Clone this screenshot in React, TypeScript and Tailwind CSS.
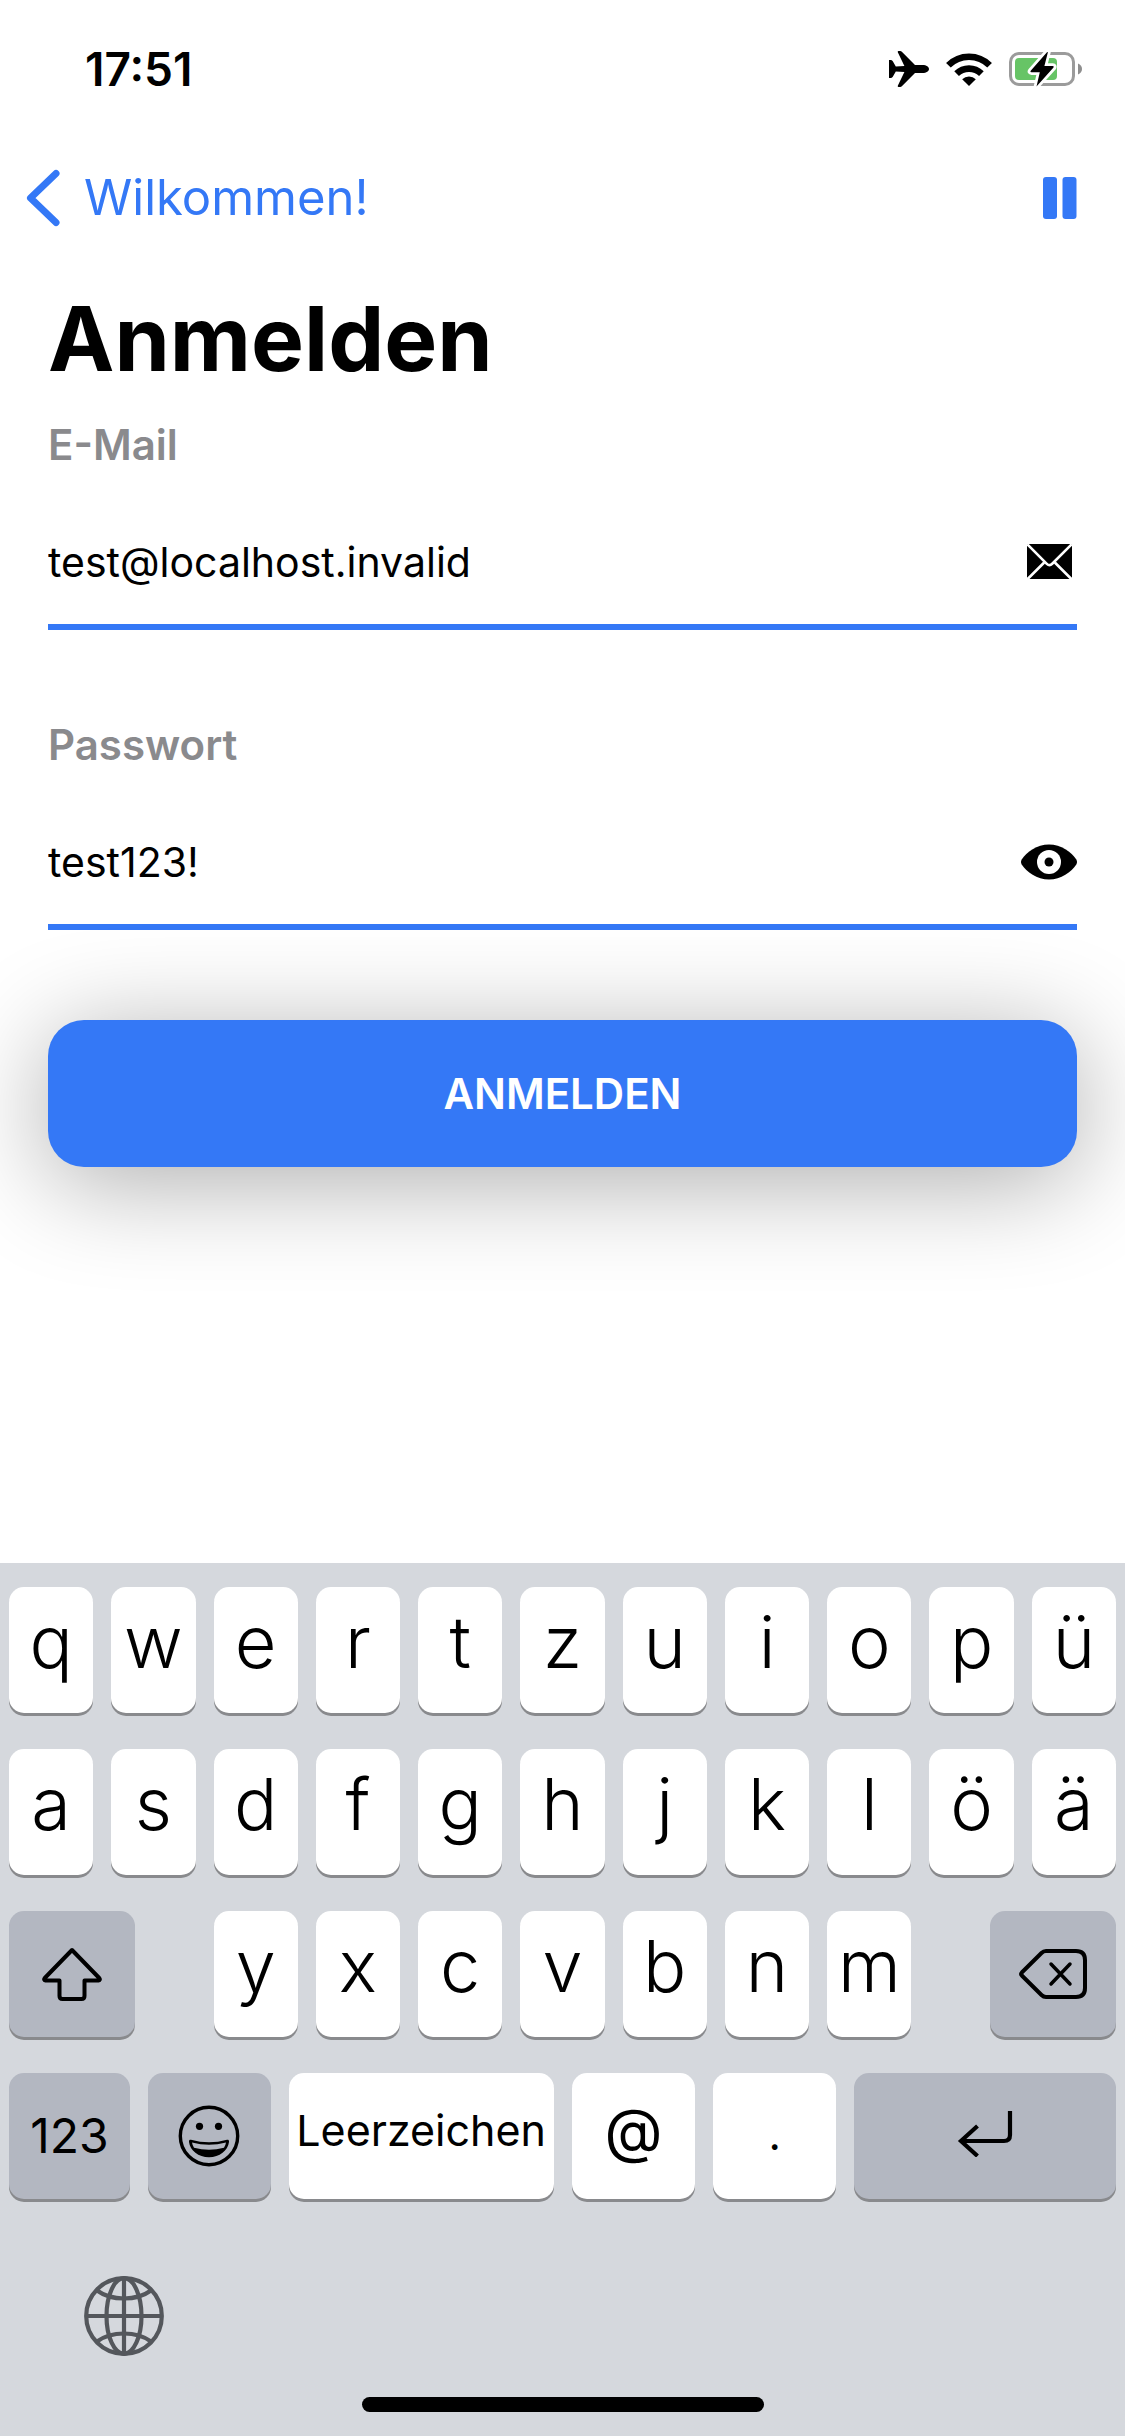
import { useState, type ReactNode } from "react";

function AirplaneIcon() {
  return (
    <svg viewBox="0 0 40 36" className="h-9 w-10" fill="#000" aria-hidden="true">
      <path d="M0 9h1.500q1.500 0 2.300 1.200l3 5.200 8.600-.5L8.800 1.200Q8.400 0 9.600 0h1.500q1.100 0 2 .9L26 14h7.500C37.500 14 40 15.900 40 18s-2.500 4-6.500 4H26L13.100 35.100q-.9.900-2 .9H9.600q-1.200 0-.8-1.200l6.600-13.700-8.600-.5-3 5.200Q3 27 1.500 27H0z" />
    </svg>
  );
}

function WifiIcon() {
  return (
    <svg viewBox="0 0 46 33" className="h-[33px] w-[46px]" aria-hidden="true">
      <g fill="none" stroke="#000" strokeWidth="6.600">
        <path d="M2.400 12.300a29 29 0 0 1 41.200 0" />
        <path d="M10.600 20.700a17.600 17.600 0 0 1 24.800 0" />
      </g>
      <path d="M23 33l-6.800-6.700a9.600 9.600 0 0 1 13.600 0z" fill="#000" />
    </svg>
  );
}

function BatteryIcon() {
  return (
    <svg viewBox="0 0 74 36" className="h-9 w-[74px]" aria-hidden="true">
      <rect x="1.500" y="2.500" width="63" height="31" rx="8.500" fill="none" stroke="#9b9b9b" strokeWidth="3" />
      <path d="M69 12.500c2.600.9 4 3 4 5.500s-1.400 4.600-4 5.500z" fill="#8e8e8e" />
      <rect x="6" y="7" width="42" height="22" rx="4" fill="#67c466" />
      <path
        d="M38.200 1 21.700 19.700q-1 1.500.8 1.500h8.300L27.500 35.400 44.500 16.600q1-1.500-.8-1.600h-8.300L38.900 1.300z"
        fill="#000"
        stroke="#fff"
        strokeWidth="5.500"
        strokeLinejoin="round"
        paintOrder="stroke"
      />
    </svg>
  );
}

function ChevronLeftIcon() {
  return (
    <svg viewBox="0 0 34 58" className="h-[58px] w-[34px]" fill="none" stroke="#3478f6" strokeWidth="7" strokeLinecap="round" strokeLinejoin="round" aria-hidden="true">
      <path d="M30 4.500 4.500 29 30 53.500" />
    </svg>
  );
}

function PauseIcon() {
  return (
    <svg viewBox="0 0 34 42" className="h-[42px] w-[34px]" fill="#3478f6" aria-hidden="true">
      <rect x="0" y="0" width="14" height="42" rx="3" />
      <rect x="19.500" y="0" width="14" height="42" rx="3" />
    </svg>
  );
}

function MailIcon() {
  return (
    <svg viewBox="0 0 45 35" className="h-[35px] w-[45px]" aria-hidden="true">
      <rect width="45" height="35" rx="2.500" fill="#000" />
      <g fill="none" stroke="#fff" strokeWidth="2.600">
        <path d="M.5.500 19.800 19.800q2.700 2.600 5.400 0L44.500.5" />
        <path d="M.5 35.200 17.200 18.500M44.500 35.200 27.800 18.500" />
      </g>
    </svg>
  );
}

function EyeIcon() {
  return (
    <svg viewBox="0 0 56 36" className="h-9 w-14" aria-hidden="true">
      <path d="M28 .5C40 .5 50.500 8 55.300 15.500q1.400 2.500 0 5C50.500 28 40 35.500 28 35.500S5.500 28 .7 20.500q-1.400-2.500 0-5C5.500 8 16 .5 28 .5z" fill="#000" />
      <circle cx="28" cy="18" r="12" fill="#fff" />
      <circle cx="28" cy="18" r="4.500" fill="#000" />
    </svg>
  );
}

function ShiftIcon() {
  return (
    <svg viewBox="0 0 60 54" className="h-[54px] w-[60px]" fill="none" stroke="#000" strokeWidth="4" strokeLinejoin="round" aria-hidden="true">
      <path d="M30 3 2.800 31q-1.600 2 .8 2.500H17.500V49q0 3 3 3h19q3 0 3-3V33.500H56.400q2.400-.5.8-2.500z" />
    </svg>
  );
}

function DeleteIcon() {
  return (
    <svg viewBox="0 0 68 50" className="h-[50px] w-[68px]" fill="none" stroke="#000" strokeWidth="4" strokeLinejoin="round" strokeLinecap="round" aria-hidden="true">
      <path d="M27 2H57q9 0 9 9V39q0 9-9 9H27q-2.500 0-4.500-2L2.800 26.500q-1.400-1.500 0-3L22.500 4Q24.500 2 27 2z" />
      <path d="M32 15 51 35M51 15 32 35" strokeWidth="3.500" />
    </svg>
  );
}

function EmojiIcon() {
  return (
    <svg viewBox="0 0 62 62" className="h-[62px] w-[62px]" aria-hidden="true">
      <circle cx="31" cy="31" r="28.700" fill="none" stroke="#000" strokeWidth="3.400" />
      <circle cx="21.500" cy="21.300" r="3.600" fill="#000" />
      <circle cx="40.500" cy="21.300" r="3.600" fill="#000" />
      <path d="M13 34.800q18 5 36 0C50 34.500 51.300 35 51 37c-1 8.500-9.500 15.300-20 15.300S12 45.500 11 37c-.3-2 1-2.500 2-2.200z" fill="#000" />
      <path d="M14 37.600q17 4.400 34 0-.4 2.800-2 5.200-15 4-30 0-1.600-2.400-2-5.200z" fill="#b3b7c1" />
    </svg>
  );
}

function ReturnIcon() {
  return (
    <svg viewBox="0 0 56 46" className="h-[46px] w-14" fill="none" stroke="#000" strokeWidth="4.200" aria-hidden="true">
      <path d="M53 0V24q0 6-6 6H4" />
      <path d="M20.500 15 4 30 20.500 45" />
    </svg>
  );
}

function GlobeIcon() {
  return (
    <svg viewBox="0 0 80 80" className="h-20 w-20" fill="none" stroke="#54575c" strokeWidth="4.200" aria-hidden="true">
      <circle cx="40" cy="40" r="37.800" />
      <ellipse cx="40" cy="40" rx="17.500" ry="37.800" />
      <path d="M40 2v76M2 40h76" />
      <path d="M13 14.500q11 8 27 8t27-8M13 65.500q11-8 27-8t27 8" />
    </svg>
  );
}

type FieldProps = {
  id: string;
  label: string;
  type: string;
  value: string;
  onChange: (value: string) => void;
  children: ReactNode;
};

function Field({ id, label, type, value, onChange, children }: FieldProps) {
  return (
    <div className="flex flex-col gap-[30px]">
      <label htmlFor={id} className="text-[42px] leading-12 font-semibold text-[#8a8a8d]">
        {label}
      </label>
      <div className="flex h-[131px] items-center border-b-6 border-[#3478f6]">
        <input
          id={id}
          type={type}
          value={value}
          onChange={(event) => onChange(event.target.value)}
          className="h-full min-w-0 flex-1 bg-transparent text-[41px] text-black outline-none"
        />
        {children}
      </div>
    </div>
  );
}

type KeyProps = {
  children: ReactNode;
  label?: string;
  className?: string;
};

const keyBase =
  "flex h-[126px] min-w-0 items-center justify-center rounded-[15px] text-black shadow-[0_3px_0_#898a8d]";

function LetterKey({ children }: KeyProps) {
  return (
    <button type="button" className={`${keyBase} bg-white pb-4 text-[72px] leading-none font-light`}>
      {children}
    </button>
  );
}

function Key({ children, label, className = "" }: KeyProps) {
  return (
    <button type="button" aria-label={label} className={`${keyBase} ${className}`}>
      {children}
    </button>
  );
}

const rows = [
  ["q", "w", "e", "r", "t", "z", "u", "i", "o", "p", "ü"],
  ["a", "s", "d", "f", "g", "h", "j", "k", "l", "ö", "ä"],
];
const bottomLetters = ["y", "x", "c", "v", "b", "n", "m"];

function Keyboard() {
  return (
    <section aria-label="Tastatur" className="mt-auto flex flex-col bg-[#d5d8dd] px-[9px] pt-6 pb-6">
      <div className="flex flex-col gap-9">
        {rows.map((row) => (
          <div key={row[0]} className="grid grid-cols-11 gap-[18px]">
            {row.map((letter) => (
              <LetterKey key={letter}>{letter}</LetterKey>
            ))}
          </div>
        ))}
        <div className="grid grid-cols-11 gap-[18px]">
          <Key label="Umschalt" className="col-span-2 w-[126px] bg-[#b3b7c1]">
            <ShiftIcon />
          </Key>
          {bottomLetters.map((letter) => (
            <LetterKey key={letter}>{letter}</LetterKey>
          ))}
          <Key label="Löschen" className="col-span-2 w-[126px] justify-self-end bg-[#b3b7c1]">
            <DeleteIcon />
          </Key>
        </div>
        <div className="grid grid-cols-[121fr_123fr_265fr_124fr_123fr_262fr] gap-[18px]">
          <Key className="bg-[#b3b7c1] text-[48px]">123</Key>
          <Key label="Emoji" className="bg-[#b3b7c1]">
            <EmojiIcon />
          </Key>
          <Key className="bg-white pb-3 text-[43px]">Leerzeichen</Key>
          <Key className="bg-white pb-3 text-[60px]">@</Key>
          <Key className="bg-white pb-1 text-[43px]">.</Key>
          <Key label="Eingabe" className="bg-[#b3b7c1] pb-1">
            <ReturnIcon />
          </Key>
        </div>
      </div>
      <button type="button" aria-label="Tastatur wechseln" className="mt-[77px] ml-[75px] self-start">
        <GlobeIcon />
      </button>
      <div className="mt-[41px] h-[15px] w-[402px] self-center rounded-full bg-black" />
    </section>
  );
}

export default function App() {
  const [email, setEmail] = useState("test@localhost.invalid");
  const [password, setPassword] = useState("test123!");
  const [visible, setVisible] = useState(true);

  return (
    <div className="flex min-h-screen flex-col bg-white font-['Inter',sans-serif] text-black">
      <header>
        <div className="flex h-[138px] items-center justify-between pr-[42px] pl-[85px]">
          <span className="text-[46px] font-semibold">17:51</span>
          <div className="flex items-center gap-[17px]">
            <AirplaneIcon />
            <WifiIcon />
            <BatteryIcon />
          </div>
        </div>
        <nav className="flex h-[120px] items-center justify-between pr-12 pl-[26px]">
          <a href="#wilkommen" className="flex items-center gap-6 text-[49px] text-[#3478f6]">
            <ChevronLeftIcon />
            Wilkommen!
          </a>
          <button type="button" aria-label="Pause">
            <PauseIcon />
          </button>
        </nav>
      </header>

      <main className="px-12 pt-6 pb-12">
        <h1 className="mb-[25px] text-[89px] leading-[114px] font-bold">Anmelden</h1>
        <form onSubmit={(event) => event.preventDefault()} className="flex flex-col">
          <div className="flex flex-col gap-[91px]">
            <Field id="email" label="E-Mail" type="email" value={email} onChange={setEmail}>
              <span className="mr-[5px]">
                <MailIcon />
              </span>
            </Field>
            <Field
              id="password"
              label="Passwort"
              type={visible ? "text" : "password"}
              value={password}
              onChange={setPassword}
            >
              <button type="button" aria-label="Passwort anzeigen" aria-pressed={visible} onClick={() => setVisible(!visible)}>
                <EyeIcon />
              </button>
            </Field>
          </div>
          <button
            type="submit"
            className="mt-[90px] h-[147px] rounded-[36px] bg-[#3478f6] text-[42px] font-semibold text-white shadow-[0_15px_104px_rgba(0,0,0,0.33)]"
          >
            ANMELDEN
          </button>
        </form>
      </main>

      <Keyboard />
    </div>
  );
}
